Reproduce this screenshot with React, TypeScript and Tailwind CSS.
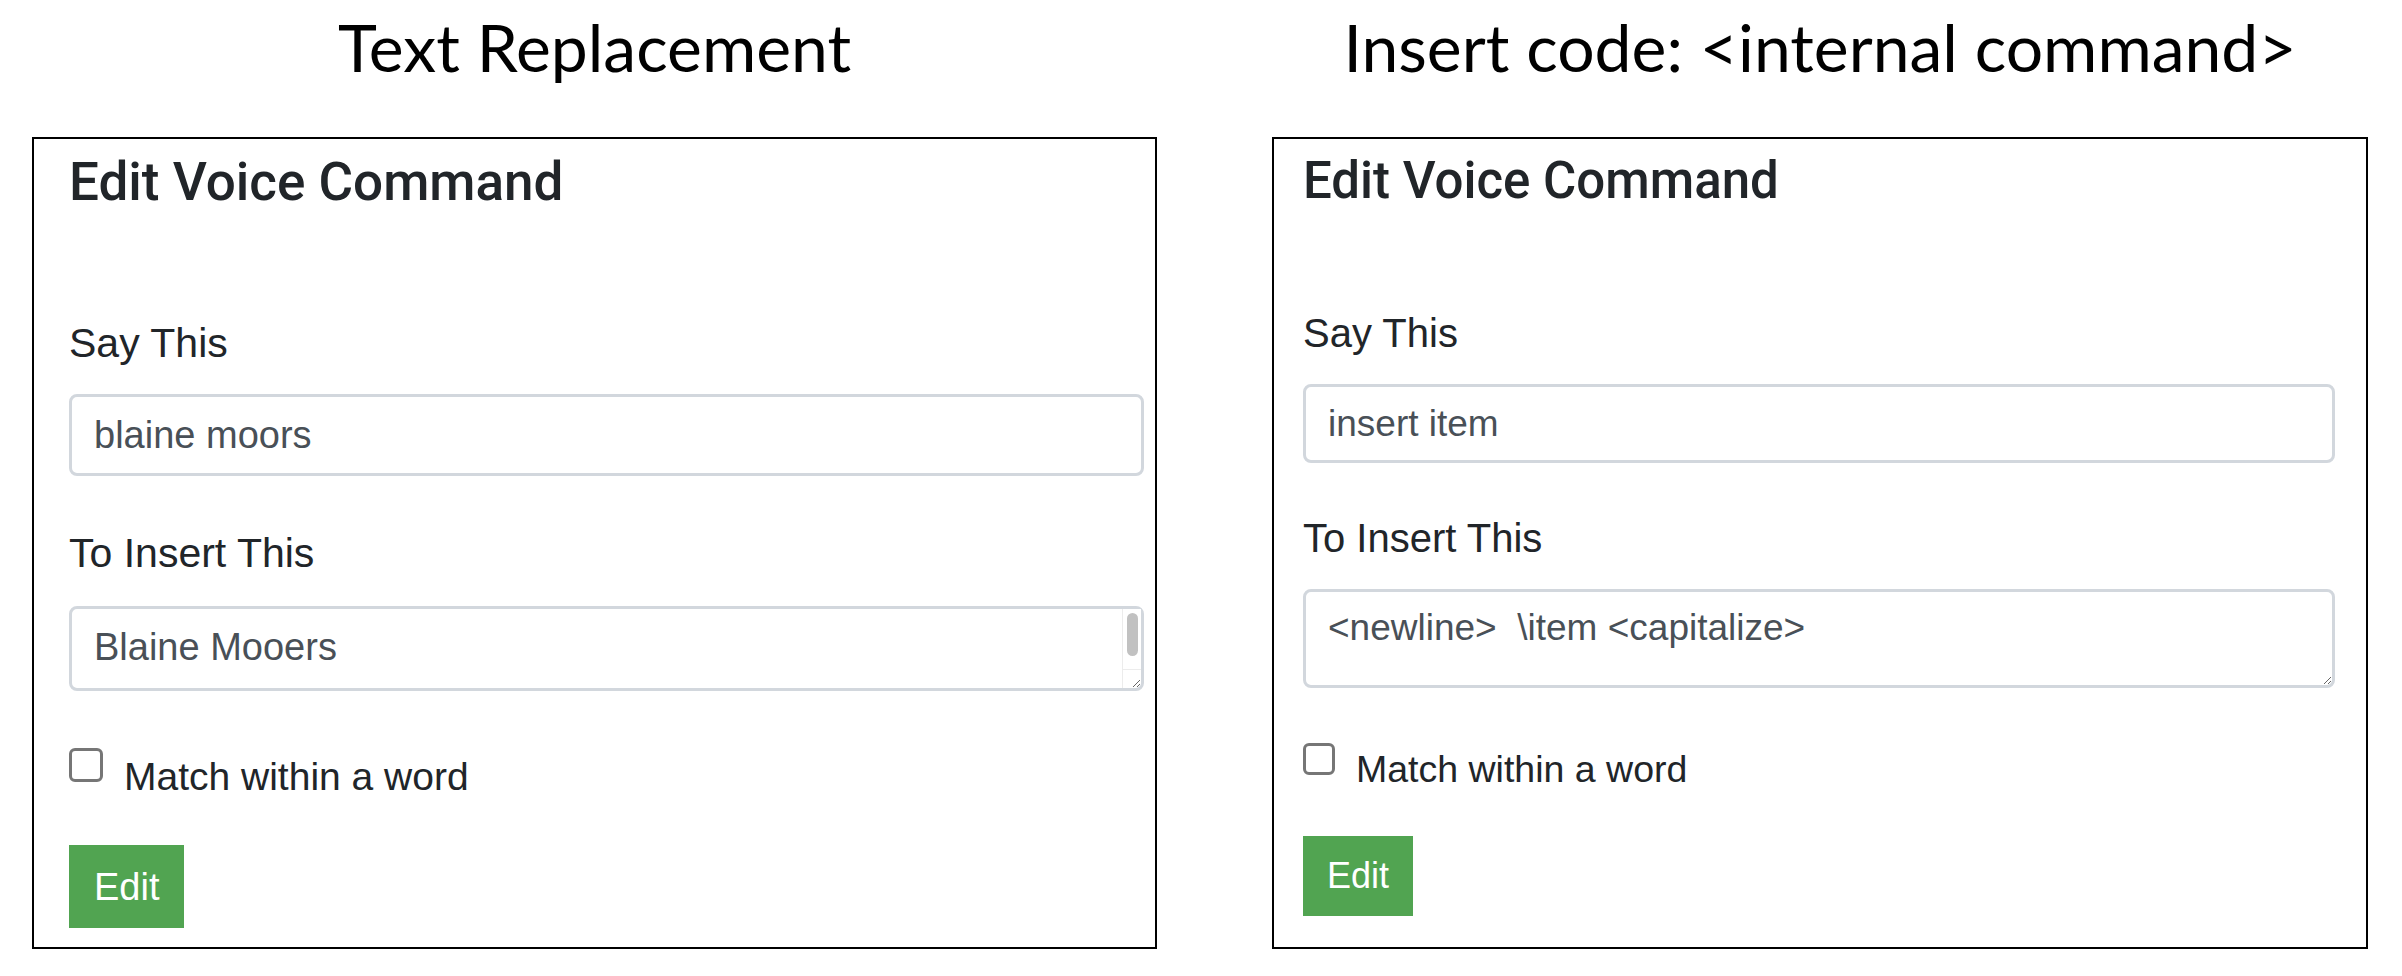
export default function App() {
  return (
    <div className="min-h-[976px] w-[2402px] bg-white font-['Liberation_Sans',Arial,sans-serif] text-[#212529]">
      <div className="flex items-start gap-[115px] pl-[32px]">
        {/* Left: text replacement */}
        <div className="flex w-[1125px] flex-col items-center">
          <h1 className="pt-[14px] font-['Lato',sans-serif] text-[66px] leading-none text-black">Text Replacement</h1>
          <div className="mt-[57px] flex h-[812px] w-full flex-col items-start border-2 border-black pt-[17px] pr-[11px] pl-[35px]">
            <h2 className="font-['Roboto',sans-serif] text-[53px] leading-none font-medium">Edit Voice Command</h2>
            <label className="mt-[114px] text-[41px] leading-none">Say This</label>
            <input
              className="mt-[30px] h-[82px] w-full rounded-[8px] border-[3px] border-[#d2d7dd] pl-[22px] font-['Liberation_Sans',Arial,sans-serif] text-[38px] text-[#495057] outline-none"
              defaultValue="blaine moors"
            />
            <label className="mt-[57px] text-[41px] leading-none">To Insert This</label>
            <div className="relative mt-[32px] w-full">
              <textarea
                className="block h-[85px] w-full rounded-[8px] border-[3px] border-[#d2d7dd] pt-[10px] pl-[22px] font-['Liberation_Sans',Arial,sans-serif] text-[38px] leading-[57px] text-[#495057] outline-none"
                defaultValue="Blaine Mooers"
              />
              {/* scrollbar drawn over the textarea */}
              <div className="pointer-events-none absolute top-[3px] right-[3px] flex h-[60px] w-[19px] justify-center border-l border-[#ececec] bg-white pt-[4px]">
                <div className="h-[43px] w-[11px] rounded-full bg-[#c1c1c1]" />
              </div>
              <div className="pointer-events-none absolute right-[3px] bottom-[3px] h-[19px] w-[19px] border-t border-l border-[#ececec]" />
            </div>
            <div className="mt-[57px] flex items-start">
              <div className="h-[34px] w-[34px] rounded-[6px] border-[3px] border-[#767676] bg-white" />
              <span className="mt-[9px] ml-[21px] text-[39px] leading-none">Match within a word</span>
            </div>
            <button className="mt-[49px] h-[83px] bg-[#51a451] px-[25px] text-[38px] leading-none text-white">Edit</button>
          </div>
        </div>

        {/* Right: internal command */}
        <div className="flex w-[1096px] flex-col items-center">
          <h1 className="pt-[14px] font-['Lato',sans-serif] text-[66px] leading-none text-black">Insert code: &lt;internal command&gt;</h1>
          <div className="mt-[57px] flex h-[812px] w-full flex-col items-start border-2 border-black pt-[16px] pr-[31px] pl-[29px]">
            <h2 className="font-['Roboto',sans-serif] text-[51px] leading-none font-medium">Edit Voice Command</h2>
            <label className="mt-[107px] text-[40px] leading-none">Say This</label>
            <input
              className="mt-[31px] h-[79px] w-full rounded-[8px] border-[3px] border-[#d2d7dd] pl-[22px] font-['Liberation_Sans',Arial,sans-serif] text-[37px] text-[#495057] outline-none"
              defaultValue="insert item"
            />
            <label className="mt-[55px] text-[40px] leading-none">To Insert This</label>
            <textarea
              className="mt-[31px] block h-[99px] w-full rounded-[8px] border-[3px] border-[#d2d7dd] pt-[8px] pl-[22px] font-['Liberation_Sans',Arial,sans-serif] text-[37px] leading-[55px] whitespace-pre text-[#495057] outline-none"
              defaultValue="<newline>  \item <capitalize>"
            />
            <div className="mt-[55px] flex items-start">
              <div className="h-[32px] w-[32px] rounded-[6px] border-[3px] border-[#767676] bg-white" />
              <span className="mt-[8px] ml-[21px] text-[37.5px] leading-none">Match within a word</span>
            </div>
            <button className="mt-[47px] h-[80px] bg-[#51a451] px-[24px] text-[36px] leading-none text-white">Edit</button>
          </div>
        </div>
      </div>
    </div>
  );
}
